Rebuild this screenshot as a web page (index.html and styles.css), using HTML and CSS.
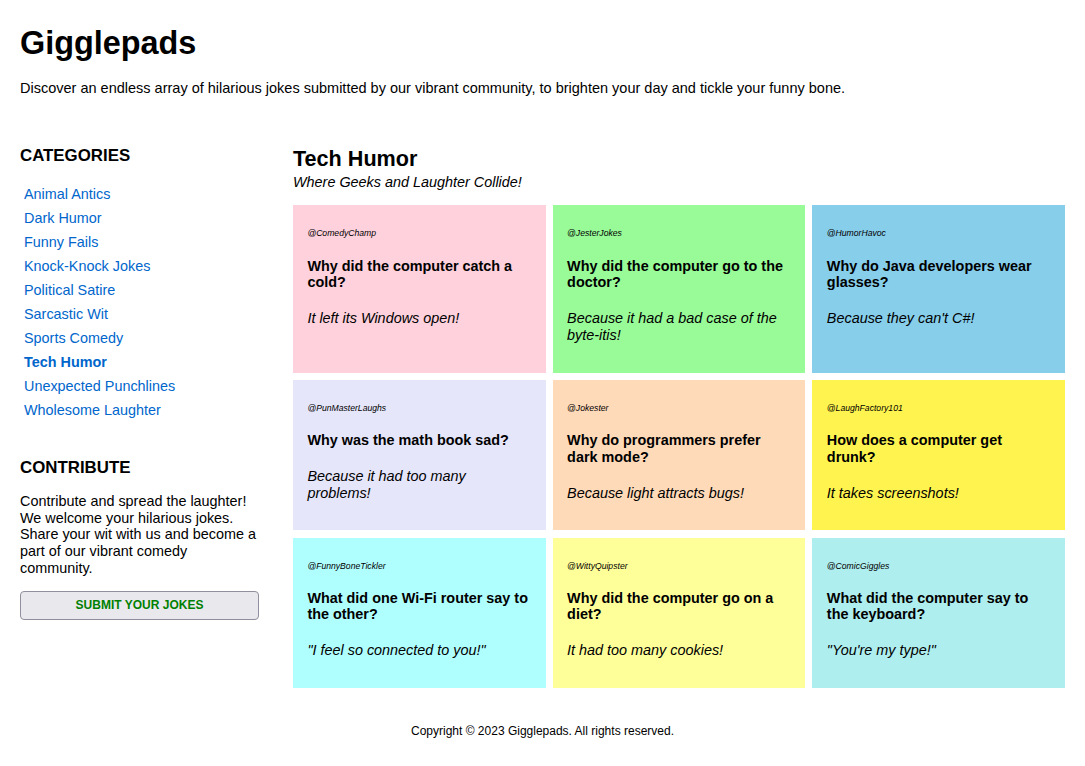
FILE: index.html
```html
<!DOCTYPE html>
<html lang="en">
<head>
<meta charset="utf-8">
<title>Gigglepads</title>
<link rel="stylesheet" href="styles.css">
</head>
<body>
<div class="page">
  <header class="site-header">
    <h1 class="site-title">Gigglepads</h1>
    <p class="site-tagline">Discover an endless array of hilarious jokes submitted by our vibrant community, to brighten your day and tickle your funny bone.</p>
  </header>
  <div class="layout">
    <aside class="sidebar">
      <h3 class="side-heading">CATEGORIES</h3>
      <ul class="cat-list">
        <li><a href="#" class="cat-link">Animal Antics</a></li>
        <li><a href="#" class="cat-link">Dark Humor</a></li>
        <li><a href="#" class="cat-link">Funny Fails</a></li>
        <li><a href="#" class="cat-link">Knock-Knock Jokes</a></li>
        <li><a href="#" class="cat-link">Political Satire</a></li>
        <li><a href="#" class="cat-link">Sarcastic Wit</a></li>
        <li><a href="#" class="cat-link">Sports Comedy</a></li>
        <li><a href="#" class="cat-link active">Tech Humor</a></li>
        <li><a href="#" class="cat-link">Unexpected Punchlines</a></li>
        <li><a href="#" class="cat-link">Wholesome Laughter</a></li>
      </ul>
      <h3 class="side-heading contribute-heading">CONTRIBUTE</h3>
      <p class="contribute-text">Contribute and spread the laughter! We welcome your hilarious jokes. Share your wit with us and become a part of our vibrant comedy community.</p>
      <button class="submit-btn" type="button">SUBMIT YOUR JOKES</button>
    </aside>
    <main class="main">
      <h2 class="cat-title">Tech Humor</h2>
      <p class="cat-sub">Where Geeks and Laughter Collide!</p>
      <div class="grid">
        <div class="card c-pink">
          <p class="user">@ComedyChamp</p>
          <h4 class="q">Why did the computer catch a cold?</h4>
          <p class="a">It left its Windows open!</p>
        </div>
        <div class="card c-green">
          <p class="user">@JesterJokes</p>
          <h4 class="q">Why did the computer go to the doctor?</h4>
          <p class="a">Because it had a bad case of the byte-itis!</p>
        </div>
        <div class="card c-blue">
          <p class="user">@HumorHavoc</p>
          <h4 class="q">Why do Java developers wear glasses?</h4>
          <p class="a">Because they can't C#!</p>
        </div>
        <div class="card c-lavender">
          <p class="user">@PunMasterLaughs</p>
          <h4 class="q">Why was the math book sad?</h4>
          <p class="a">Because it had too many problems!</p>
        </div>
        <div class="card c-peach">
          <p class="user">@Jokester</p>
          <h4 class="q">Why do programmers prefer dark mode?</h4>
          <p class="a">Because light attracts bugs!</p>
        </div>
        <div class="card c-yellow">
          <p class="user">@LaughFactory101</p>
          <h4 class="q">How does a computer get drunk?</h4>
          <p class="a">It takes screenshots!</p>
        </div>
        <div class="card c-cyan">
          <p class="user">@FunnyBoneTickler</p>
          <h4 class="q">What did one Wi-Fi router say to the other?</h4>
          <p class="a">"I feel so connected to you!"</p>
        </div>
        <div class="card c-paleyellow">
          <p class="user">@WittyQuipster</p>
          <h4 class="q">Why did the computer go on a diet?</h4>
          <p class="a">It had too many cookies!</p>
        </div>
        <div class="card c-turquoise">
          <p class="user">@ComicGiggles</p>
          <h4 class="q">What did the computer say to the keyboard?</h4>
          <p class="a">"You're my type!"</p>
        </div>
      </div>
    </main>
  </div>
  <footer class="site-footer">Copyright © 2023 Gigglepads. All rights reserved.</footer>
</div>
</body>
</html>
```
FILE: styles.css
```css
html, body {
  margin: 0;
  padding: 0;
  background: #ffffff;
}
body {
  font-family: "Liberation Sans", Arial, sans-serif;
  font-size: 14.4px;
  line-height: 16.8px;
  color: #000000;
}
.page {
  padding: 0 20px;
}
.site-header {
  padding-top: 25px;
}
.site-title {
  font-size: 32.4px;
  line-height: normal;
  font-weight: bold;
  margin: 0 0 18px;
}
.site-tagline {
  margin: 0;
  font-size: 14.5px;
}
.layout {
  display: flex;
  gap: 34px;
  margin-top: 49px;
  align-items: flex-start;
}
.sidebar {
  width: 239px;
  flex: 0 0 239px;
}
.side-heading {
  font-size: 16.85px;
  line-height: normal;
  font-weight: bold;
  margin: 0;
}
.cat-list {
  list-style: none;
  margin: 16px 0 0;
  padding: 0 0 0 4px;
}
.cat-list li {
  line-height: 24px;
  height: 24px;
}
.cat-link {
  color: #0066cc;
  text-decoration: none;
}
.cat-link.active {
  font-weight: bold;
}
.contribute-heading {
  margin-top: 36px;
}
.contribute-text {
  margin: 15px 0 14px;
}
.submit-btn {
  display: block;
  width: 239px;
  height: 29px;
  background: #e9e9ed;
  border: 1px solid #8f8f9d;
  border-radius: 4px;
  color: #008000;
  font-family: "Liberation Sans", Arial, sans-serif;
  font-size: 12px;
  font-weight: bold;
  padding: 0;
}
.main {
  flex: 1;
  min-width: 0;
  padding-top: 2px;
}
.cat-title {
  font-size: 21.6px;
  line-height: 21px;
  font-weight: bold;
  margin: 0 0 5px;
}
.cat-sub {
  font-style: italic;
  margin: 0 0 14.8px;
}
.grid {
  display: grid;
  grid-template-columns: repeat(3, 1fr);
  gap: 7.2px;
}
.card {
  padding: 14.4px;
}
.user {
  font-size: 8.64px;
  line-height: normal;
  font-style: italic;
  margin: 8.64px 0 0;
}
.q {
  font-size: 14.4px;
  font-weight: bold;
  margin: 19.15px 0;
}
.a {
  font-style: italic;
  margin: 0 0 14.4px;
}
.c-pink { background: #ffd1dc; }
.c-green { background: #98fb98; }
.c-blue { background: #87ceeb; }
.c-lavender { background: #e6e6fa; }
.c-peach { background: #ffdab9; }
.c-yellow { background: #fff44f; }
.c-cyan { background: #b0ffff; }
.c-paleyellow { background: #ffff99; }
.c-turquoise { background: #afeeee; }
.site-footer {
  text-align: center;
  font-size: 12px;
  line-height: normal;
  margin-top: 36px;
  padding-bottom: 20px;
}
```
